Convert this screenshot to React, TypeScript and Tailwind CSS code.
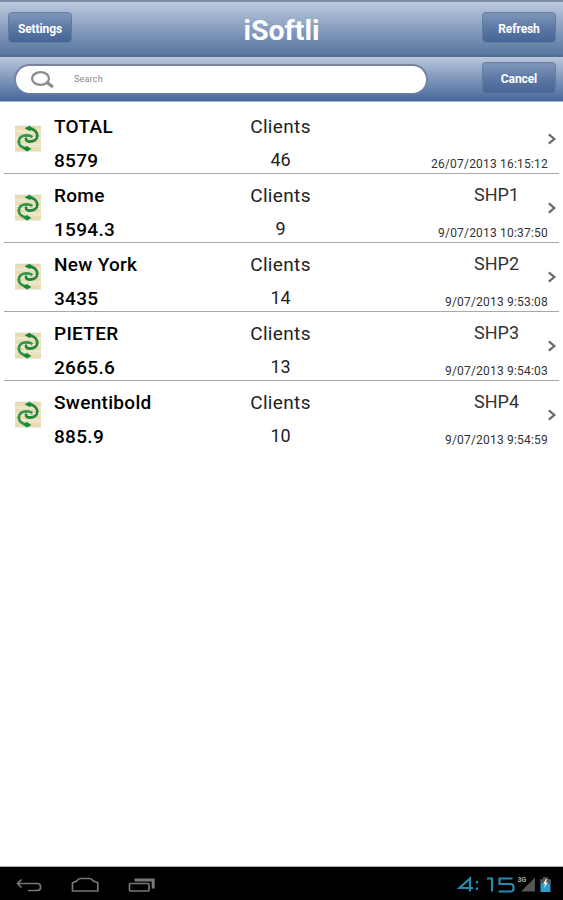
import React from "react";

type Client = { name: string; amount: string; clients: string; code: string; date: string };

const rows: Client[] = [
  { name: "TOTAL", amount: "8579", clients: "46", code: "", date: "26/07/2013 16:15:12" },
  { name: "Rome", amount: "1594.3", clients: "9", code: "SHP1", date: "9/07/2013 10:37:50" },
  { name: "New York", amount: "3435", clients: "14", code: "SHP2", date: "9/07/2013 9:53:08" },
  { name: "PIETER", amount: "2665.6", clients: "13", code: "SHP3", date: "9/07/2013 9:54:03" },
  { name: "Swentibold", amount: "885.9", clients: "10", code: "SHP4", date: "9/07/2013 9:54:59" },
];

function HeaderButton({ label, className }: { label: string; className: string }) {
  return (
    <button
      className={`flex items-center justify-center rounded-[4px] border border-[#647ca1] bg-linear-to-b from-[#8096b9] via-[#5d7aa6] to-[#466595] pt-0.5 text-[12px] font-bold tracking-[-0.1px] text-white ${className}`}
    >
      {label}
    </button>
  );
}

function SyncIcon() {
  return (
    <svg width="28" height="28" viewBox="0 0 28 28" fill="none">
      <rect x="1" y="1" width="26" height="25" fill="#f9f5e6" />
      <path d="M1 3.500h26M1 10h26M1 16.800h26M1 23.500h26" stroke="#eadcae" strokeWidth="4" />
      <path d="M1 1.200h26M1 7h26M1 13.500h26M1 20.200h26M1 26h26" stroke="#cfc7ad" strokeWidth="0.700" />
      <path
        d="M15 3.500C20 4 23.300 6.800 23.300 10.500c0 4-3.800 6-7.500 6-2.300 0-3.800-1-3.800-2.800"
        stroke="#23863f" strokeWidth="2.800" strokeLinecap="round"
      />
      <path
        d="M13 23.500C8 23 4.800 20 4.800 16.500c0-4 3.700-6.200 7.700-6.200 2.300 0 4 .4 5 1.200"
        stroke="#2e9549" strokeWidth="2.800" strokeLinecap="round"
      />
      <path d="M11 3.300 15.500 1l2.800 2.200-2.800 2.500zM17 24 13 26.300l-3.500-2.500L13 21.300z" fill="#118a35" stroke="#118a35" strokeWidth="0.500" />
    </svg>
  );
}

function Chevron() {
  return (
    <svg className="-ml-px" width="10" height="12" viewBox="0 0 10 12" fill="none">
      <path d="M1.800 1.300 7.300 6 1.800 10.700" stroke="#6b6b6b" strokeWidth="2.300" />
    </svg>
  );
}

function Row({ row, last }: { row: Client; last: boolean }) {
  return (
    <li
      className={`mx-1 grid h-[69px] grid-cols-[50px_126px_201px_167px_1fr] border-b ${last ? "border-transparent" : "border-[#a9a9a9]"}`}
    >
      <div className="flex items-center pb-px pl-2.5">
        <SyncIcon />
      </div>
      <div className="flex flex-col gap-2.5 pt-2.5 text-[19px] leading-6 font-medium tracking-[0.3px] whitespace-nowrap text-black">
        <span>{row.name}</span>
        <span>{row.amount}</span>
      </div>
      <div className="flex flex-col items-center gap-2.5 pt-2.5 text-[19px] leading-6 tracking-[0.35px] text-[#222]">
        <span>Clients</span>
        <span className="text-[18px] leading-[22px] tracking-normal">{row.clients}</span>
      </div>
      <div className="flex flex-col items-end pt-[7px]">
        <span className="h-[27px] w-[103px] text-center text-[18px] leading-[27px] text-[#333]">{row.code}</span>
        <span className="mt-[15px] text-[12px] leading-5 tracking-[0.2px] whitespace-nowrap text-[#333]">{row.date}</span>
      </div>
      <div className="flex items-center pb-px">
        <Chevron />
      </div>
    </li>
  );
}

function StatusBar() {
  return (
    <footer className="flex h-[34px] items-center border-t border-[#aaa] bg-black pl-4">
      <svg className="-mt-0.5" width="140" height="32" viewBox="0 0 140 32" fill="none" stroke="#777" strokeWidth="1.700">
        <path d="M5.500 12.500 1.500 16.500l4 4M2 16.500h19.500a3 3 0 0 1 3 3v1a3 3 0 0 1-3 3H12" />
        <path d="M56.500 24V15.800L61 13.800q1-2.300 3.500-2.300h9q2.500 0 3.500 2.300l4.800 2V24z" />
        <rect x="113.500" y="16.500" width="19.500" height="7.500" rx="1" />
        <path d="M118.500 13h18.700v8.500" strokeWidth="3" />
      </svg>
      <svg className="-mt-0.5 mr-[10px] ml-auto" width="97" height="32" viewBox="0 0 97 32" fill="none">
        <g stroke="#2589b0" strokeWidth="2.200">
          <path d="M14 24.500V11.500L3.500 21H17M21 14v2.500M21 20.500V23M31 11.500h5v13M56.500 11.500H43.500v5.500h11q3 0 3 3v1.500q0 3-3 3h-12" />
        </g>
        <path d="M79 10.500v14H65z" fill="#555" />
        <text x="61.500" y="15" fill="#aaa" fontSize="7" fontWeight="bold" fontFamily="Roboto, sans-serif">3G</text>
        <path d="M84.500 12.500H87V10.500h5v2h2.500V25h-10z" fill="#2c9dcc" />
        <path d="M84.500 12.500H87V10.500h5v2h2.500V17h-10z" fill="#555" />
        <path d="m90 12-3 5h2l-1 4 4-5.500h-2l1-3.500z" fill="#eee" />
      </svg>
    </footer>
  );
}

export default function App() {
  return (
    <div className="flex h-[900px] w-[563px] flex-col bg-white font-['Roboto',sans-serif]">
      <header className="grid h-[57px] grid-cols-[64px_1fr_74px] border-t-2 border-b-2 border-t-[#7b8ca8] border-b-[#546c91] bg-linear-to-b from-[#bbc9de] to-[#58769f] pr-[7px] pl-2">
        <HeaderButton label="Settings" className="mt-2.5 h-[31px]" />
        <h1 className="mt-px pt-px pl-[9px] text-center text-[28.500px] leading-[54px] font-bold text-white">iSoftli</h1>
        <HeaderButton label="Refresh" className="mt-2.5 h-[31px]" />
      </header>
      <div className="flex h-[45px] justify-between border-b border-[#a6b5cb] bg-linear-to-b from-[#bbc8dd] to-[#46679a] pr-[7px] pl-3.5">
        <div className="mt-[7px] flex h-[31px] w-[414px] items-center rounded-full border-2 border-t-[#7b829b] border-r-[#7285a4] border-b-[#617da5] border-l-[#7285a4] bg-white pl-3.5">
          <svg width="26" height="18" viewBox="0 0 26 18" fill="none" stroke="#8c8c8c">
            <ellipse cx="10.500" cy="7.500" rx="8.500" ry="6.300" strokeWidth="2.300" />
            <path d="m17 11.500 6 4.500" strokeWidth="3" />
          </svg>
          <span className="ml-[18px] text-[9px] tracking-[0.2px] text-[#888]">Search</span>
        </div>
        <HeaderButton label="Cancel" className="mt-[5px] h-8 w-[74px]" />
      </div>
      <ul className="flex-1 pt-[3px]">
        {rows.map((row, i) => (
          <Row key={row.name} row={row} last={i === rows.length - 1} />
        ))}
      </ul>
      <StatusBar />
    </div>
  );
}
